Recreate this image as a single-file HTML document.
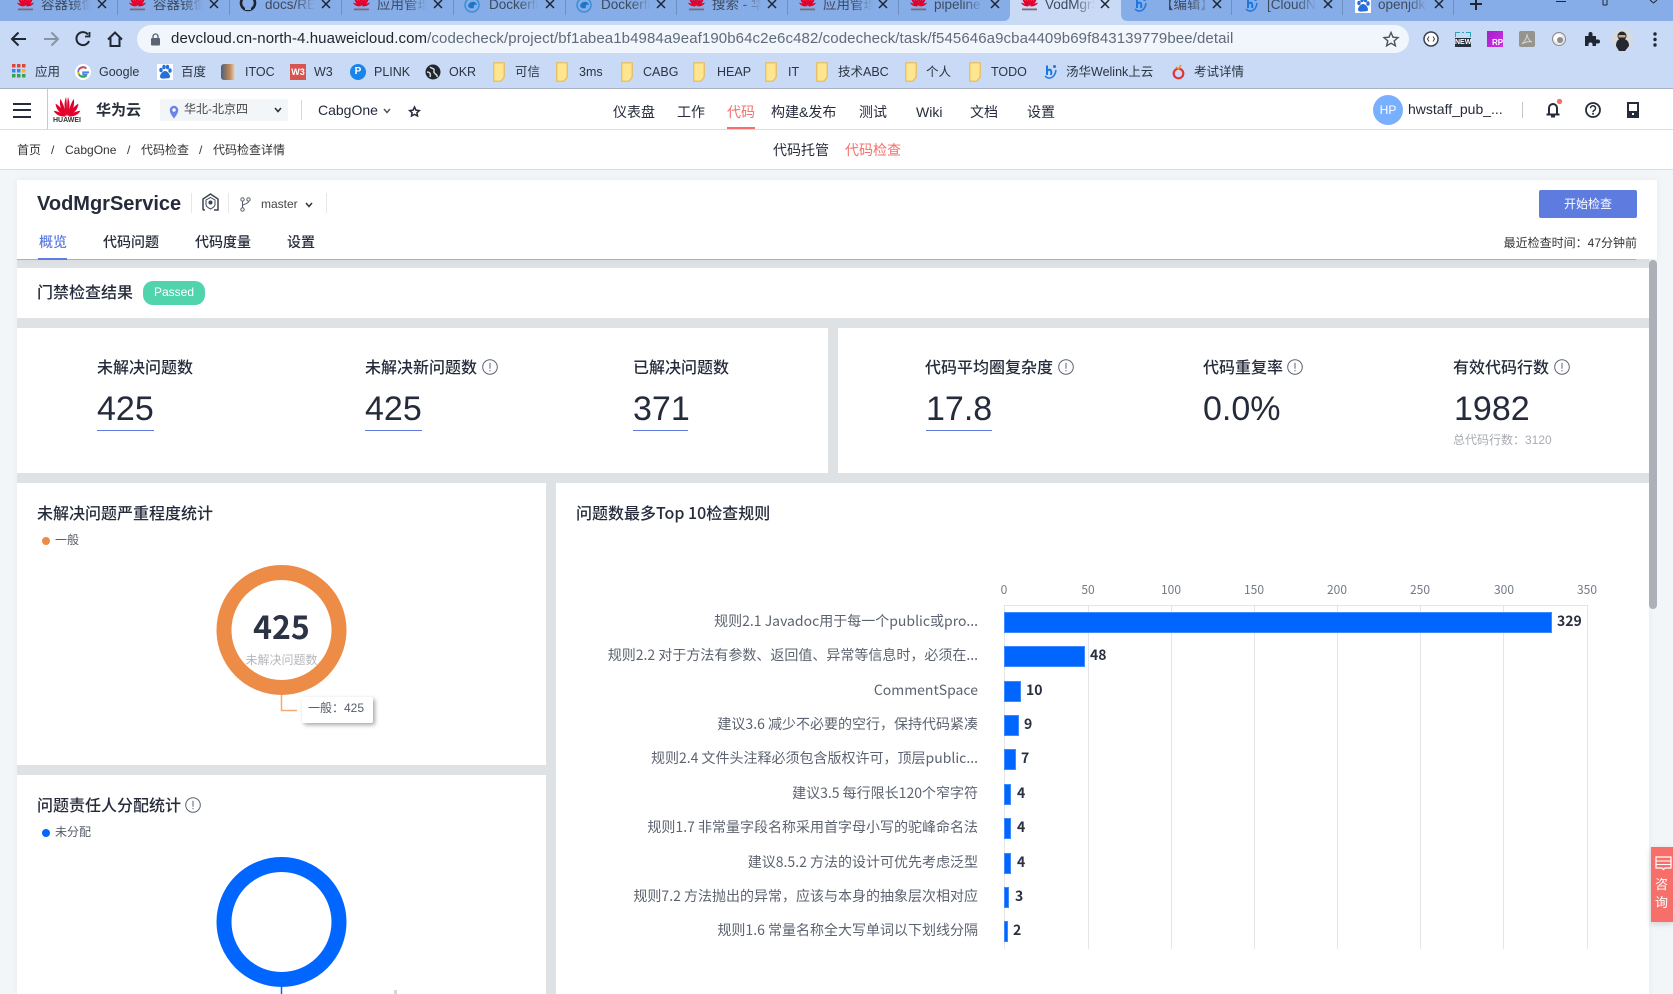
<!DOCTYPE html>
<html lang="zh"><head><meta charset="utf-8"><title>VodMgrService</title>
<style>
html,body{margin:0;padding:0;width:1673px;height:994px;overflow:hidden;background:#f3f6f9}
body{position:relative;font-family:"Liberation Sans","Noto Sans CJK SC",sans-serif;color:#252b3a}
.t{position:absolute;white-space:nowrap;line-height:20px;height:20px}
.b{position:absolute}
svg{position:absolute;overflow:visible}
.tab{font-size:13.5px;color:#3d4a5c;overflow:hidden;width:50px;top:-5px;-webkit-mask-image:linear-gradient(90deg,#000 60%,transparent);mask-image:linear-gradient(90deg,#000 60%,transparent)}
.bm{font-size:12.5px;color:#2b3440}
.n{font-size:14px;color:#252b3a}
.h{font-size:16px;font-weight:500;font-family:"Noto Sans CJK SC","Liberation Sans",sans-serif;color:#252b3a}
.big{font-size:34px;color:#252b3a;line-height:40px;height:40px}
.u{position:absolute;height:1px;background:#5e7ce0;top:430px}
.r{position:absolute;right:695px;font-family:"Noto Sans CJK SC",sans-serif;font-size:14px;color:#5c6370;white-space:nowrap;line-height:20px;height:20px}
.v{position:absolute;font-family:"Noto Sans CJK SC",sans-serif;font-size:14px;font-weight:700;color:#2a3042;line-height:20px;height:20px}
.bar{position:absolute;left:1004px;height:20.5px;background:#0066ff;box-shadow:inset 0 0 0 1px #3d8bff}
.ax{position:absolute;top:580px;font-family:"Noto Sans CJK SC",sans-serif;font-size:12px;color:#737a88;line-height:20px;width:40px;text-align:center}
.g{position:absolute;top:605px;height:344px;width:1px;background:#e4e5e8}
</style></head><body>

<svg width="0" height="0" style="position:absolute">
<symbol id="hw" viewBox="0 0 28 22">
<g fill="#e2002a">
<path d="M14 21C11 15 10.500 7 13 1 14 6 14 15 14 21Z"/>
<path d="M14 21C17 15 17.500 7 15 1 14 6 14 15 14 21Z"/>
<path d="M13.500 21C8 17 5.500 9 7 3 10 8 12.500 15 13.500 21Z"/>
<path d="M14.500 21C20 17 22.500 9 21 3 18 8 15.500 15 14.500 21Z"/>
<path d="M13 21C7 19 2.500 14 2 8 7 11 11 16 13 21Z"/>
<path d="M15 21C21 19 25.500 14 26 8 21 11 17 16 15 21Z"/>
<path d="M12.500 21.500C7 22 2 19.500 0 15.500 5 16 10 18.500 12.500 21.500Z"/>
<path d="M15.500 21.500C21 22 26 19.500 28 15.500 23 16 18 18.500 15.500 21.500Z"/>
</g></symbol>
<symbol id="thw" viewBox="0 0 17 20"><use href="#hw" width="17" height="14" x="0" y="0"/><rect x="1" y="15.500" width="15" height="1.800" fill="#7a6a78"/></symbol>
<symbol id="info" viewBox="0 0 16 16"><circle cx="8" cy="8" r="7.300" fill="none" stroke="#5a6270" stroke-width="1"/><path d="M8 3.800V9.800M8 11v1.300" stroke="#5a6270" stroke-width="1" fill="none"/></symbol>
<symbol id="x" viewBox="0 0 10 10"><path d="M1 1L9 9M9 1L1 9" stroke="#1e2632" stroke-width="1.500" fill="none"/></symbol>
<symbol id="hi" viewBox="0 0 16 16"><path d="M5 1.500V11M5 7c3-3 5-1 4 4" fill="none" stroke="#1a78e0" stroke-width="2"/><path d="M3 12c4 4 10 2 11-6" fill="none" stroke="#1a78e0" stroke-width="1.500"/><circle cx="12.500" cy="2.500" r="1.500" fill="#1a78e0"/></symbol>
<symbol id="fd" viewBox="0 0 12 20"><path d="M.8.800H11.200V15L8 19.200H.8Z" fill="#ffe58f" stroke="#e8bd4d" stroke-width="1.200"/></symbol>
<symbol id="paw" viewBox="0 0 16 16"><rect width="16" height="16" fill="#fff"/><g fill="#2a6fd8"><ellipse cx="4" cy="6" rx="1.700" ry="2.300"/><ellipse cx="7" cy="3" rx="1.700" ry="2.300"/><ellipse cx="10.500" cy="3" rx="1.700" ry="2.300"/><ellipse cx="13" cy="6.500" rx="1.700" ry="2.300"/><path d="M8 7c-2.500 0-5 3.500-5 5.500S5.500 15 8 14.500 13 15 13 12.500 10.500 7 8 7Z"/></g></symbol>
<symbol id="ed" viewBox="0 0 16 16"><circle cx="8" cy="8" r="7" fill="none" stroke="#3a8fd8" stroke-width="1.500"/><path d="M4 9c1-5 8-6 9-1-2-1-4 0-3 3-3 1-5 0-6-2Z" fill="#1a78c8"/></symbol>
</svg>

<!-- Tab strip -->
<div class="b" style="left:0;top:0;width:1673px;height:21px;background:#87ade8"></div>
<div class="b" style="left:0;top:21px;width:1673px;height:68px;background:#c9daf6"></div>
<div class="b" style="left:0;top:88px;width:1673px;height:1px;background:#a9b2c4"></div>
<svg style="left:0;top:0" width="1673" height="21"><path d="M1003 21Q1010 21 1010 14V0H1121V14Q1121 21 1128 21Z" fill="#c9daf6"/>
<g stroke="#6d8fc2" stroke-width="1"><path d="M117.500 0V15M229.500 0V15M341.500 0V15M453.500 0V15M565.500 0V15M676.500 0V15M787.500 0V15M898.500 0V15M1231.500 0V15M1342.500 0V15M1453.500 0V15"/></g></svg>

<svg style="left:17px;top:-7px" width="17" height="20"><use href="#thw" width="17" height="20"/></svg><div class="t tab" style="left:41px">容器镜像</div>
<svg style="left:129px;top:-7px" width="17" height="20"><use href="#thw" width="17" height="20"/></svg><div class="t tab" style="left:153px">容器镜像</div>
<svg style="left:240px;top:-5px" width="16" height="16"><circle cx="8" cy="8" r="7" fill="none" stroke="#1c2430" stroke-width="2.600"/><path d="M5 15V10H11V15Z" fill="#87ade8"/></svg><div class="t tab" style="left:265px">docs/README</div>
<svg style="left:353px;top:-7px" width="17" height="20"><use href="#thw" width="17" height="20"/></svg><div class="t tab" style="left:377px">应用管理</div>
<svg style="left:464px;top:-3px" width="16" height="16"><use href="#ed" width="16" height="16"/></svg><div class="t tab" style="left:489px">Dockerfile</div>
<svg style="left:576px;top:-3px" width="16" height="16"><use href="#ed" width="16" height="16"/></svg><div class="t tab" style="left:601px">Dockerfile</div>
<svg style="left:688px;top:-7px" width="17" height="20"><use href="#thw" width="17" height="20"/></svg><div class="t tab" style="left:712px">搜索 - 华为</div>
<svg style="left:799px;top:-7px" width="17" height="20"><use href="#thw" width="17" height="20"/></svg><div class="t tab" style="left:823px">应用管理</div>
<svg style="left:910px;top:-7px" width="17" height="20"><use href="#thw" width="17" height="20"/></svg><div class="t tab" style="left:934px">pipeline</div>
<svg style="left:1021px;top:-7px" width="17" height="20"><use href="#thw" width="17" height="20"/></svg><div class="t tab" style="left:1045px">VodMgrService</div>
<svg style="left:1132px;top:-3px" width="16" height="16"><use href="#hi" width="16" height="16"/></svg><div class="t tab" style="left:1160px">【编辑】</div>
<svg style="left:1243px;top:-3px" width="16" height="16"><use href="#hi" width="16" height="16"/></svg><div class="t tab" style="left:1267px">[CloudNative</div>
<svg style="left:1355px;top:-3px" width="16" height="16"><use href="#paw" width="16" height="16"/></svg><div class="t tab" style="left:1378px">openjdk</div>

<svg style="left:97px;top:-1px" width="10" height="10"><use href="#x" width="10" height="10"/></svg>
<svg style="left:209px;top:-1px" width="10" height="10"><use href="#x" width="10" height="10"/></svg>
<svg style="left:321px;top:-1px" width="10" height="10"><use href="#x" width="10" height="10"/></svg>
<svg style="left:433px;top:-1px" width="10" height="10"><use href="#x" width="10" height="10"/></svg>
<svg style="left:545px;top:-1px" width="10" height="10"><use href="#x" width="10" height="10"/></svg>
<svg style="left:656px;top:-1px" width="10" height="10"><use href="#x" width="10" height="10"/></svg>
<svg style="left:767px;top:-1px" width="10" height="10"><use href="#x" width="10" height="10"/></svg>
<svg style="left:878px;top:-1px" width="10" height="10"><use href="#x" width="10" height="10"/></svg>
<svg style="left:990px;top:-1px" width="10" height="10"><use href="#x" width="10" height="10"/></svg>
<svg style="left:1100px;top:-1px" width="10" height="10"><use href="#x" width="10" height="10"/></svg>
<svg style="left:1212px;top:-1px" width="10" height="10"><use href="#x" width="10" height="10"/></svg>
<svg style="left:1323px;top:-1px" width="10" height="10"><use href="#x" width="10" height="10"/></svg>
<svg style="left:1434px;top:-1px" width="10" height="10"><use href="#x" width="10" height="10"/></svg>
<svg style="left:1470px;top:-2px" width="12" height="12"><path d="M6 0V12M0 6H12" stroke="#1e2632" stroke-width="2"/></svg>
<svg style="left:1550px;top:0" width="120" height="8" fill="none" stroke="#1e2632" stroke-width="1"><path d="M6 1.500H16M53 5V0M57 5H53M57 0V5M100 0L103.500 3L107 0"/></svg>

<!-- Toolbar -->
<svg style="left:10px;top:29px" width="120" height="20" fill="none" stroke="#1f2733" stroke-width="2">
<path d="M16 10H2M8.500 3.500L2 10L8.500 16.500"/>
<path d="M34 10H48M41.500 3.500L48 10L41.500 16.500" stroke="#8694a6"/>
<path d="M78 5.500A6.500 6.500 0 1 0 79 12"/><path d="M79.500 3V7.500H75" stroke-width="1.800"/>
<path d="M98 10.500L105 3.500L112 10.500M100.500 9V17H109.500V9"/></svg>
<div class="b" style="left:137px;top:25px;width:1272px;height:28px;border-radius:14px;background:#f1f5fc"></div>
<svg style="left:150px;top:33px" width="11" height="13"><rect x="1" y="5" width="9" height="7.500" rx="1" fill="#5a6472"/><path d="M3 5.500V3.500a2.500 2.500 0 0 1 5 0V5.500" fill="none" stroke="#5a6472" stroke-width="1.300"/></svg>
<div class="t" id="url" style="left:171px;top:29px;font-size:15px;letter-spacing:.1px;color:#5f6b7a"><span style="color:#1c2430">devcloud.cn-north-4.huaweicloud.com</span>/codecheck/project/bf1abea1b4984a9eaf190b64c2e6c482/codecheck/task/f545646a9cba4409b69f843139779bee/detail</div>
<svg style="left:1383px;top:31px" width="16" height="16"><path d="M8 1.500L10 6.200L15 6.600L11.200 9.900L12.400 14.800L8 12.200L3.600 14.800L4.800 9.900L1 6.600L6 6.200Z" fill="none" stroke="#4a525e" stroke-width="1.400"/></svg>
<svg style="left:1423px;top:31px" width="16" height="16"><circle cx="8" cy="8" r="7" fill="#fff" stroke="#39424f" stroke-width="1.500"/><path d="M6 5.500L4.500 8L6 10.500M10 5.500L11.500 8L10 10.500" fill="none" stroke="#39424f"/></svg>
<div class="b" style="left:1455px;top:38px;width:16px;height:9px;background:#26303c"></div>
<svg style="left:1455px;top:32px" width="16" height="6"><path d="M.5 5V.5H5M11 .5H15.500V5M7 .5H9" fill="none" stroke="#2aa5b8"/></svg>
<div class="t" style="left:1455px;top:32.500px;width:16px;text-align:center;font-size:7px;font-weight:700;color:#fff">NEW</div>
<div class="b" style="left:1487px;top:31px;width:16px;height:16px;background:linear-gradient(135deg,#a31fc8,#d030e8)"></div><div class="t" style="left:1492px;top:33px;font-size:8px;font-weight:700;color:#fff">RP</div>
<div class="b" style="left:1519px;top:31px;width:16px;height:16px;background:#96948f;border-radius:2px"></div><svg style="left:1519px;top:31px" width="16" height="16"><path d="M3 13C7 9 8 5 8 3 8 6 10 10 13 11 9 10 6 11 3 13Z" fill="none" stroke="#d5d3ce"/></svg>
<svg style="left:1552px;top:32px" width="14" height="14"><circle cx="7" cy="7" r="6.500" fill="#e8e8e8" stroke="#8c8c8c"/><circle cx="6" cy="6" r="4" fill="#fff"/><circle cx="8" cy="8" r="3" fill="#8d8d8d"/></svg>
<svg style="left:1583px;top:31px" width="16" height="16"><path d="M2 5H5.500V3a2 2 0 0 1 4 0V5H13V8.500H15a2 2 0 0 1 0 4H13V15H9.500V13.500a2 2 0 0 0-4 0V15H2Z" fill="#1f2733"/></svg>
<svg style="left:1612px;top:28px" width="21" height="23"><circle cx="10.500" cy="11.500" r="10.500" fill="#d7dbe0"/><path d="M4 18C4 11 8 11 10 11S17 11 17 18L13 23H7Z" fill="#25282c"/><circle cx="10" cy="8" r="4.500" fill="#25282c"/><rect x="6.500" y="7" width="7" height="2.500" fill="#d9a577"/></svg>
<svg style="left:1653px;top:32px" width="4" height="15" fill="#1f2733"><circle cx="2" cy="2" r="1.700"/><circle cx="2" cy="7.500" r="1.700"/><circle cx="2" cy="13" r="1.700"/></svg>

<!-- Bookmarks -->
<svg style="left:12px;top:64px" width="14" height="14"><g fill="#e0453a"><rect width="3.500" height="3.500"/><rect x="5" width="3.500" height="3.500"/><rect x="10" width="3.500" height="3.500"/></g><g fill="#3f82e6"><rect y="5" width="3.500" height="3.500"/><rect x="5" y="5" width="3.500" height="3.500"/></g><rect x="10" y="5" width="3.500" height="3.500" fill="#f3b42d"/><g fill="#39a24f"><rect y="10" width="3.500" height="3.500"/><rect x="5" y="10" width="3.500" height="3.500"/><rect x="10" y="10" width="3.500" height="3.500"/></g></svg>
<div class="t bm" style="left:35px;top:62px">应用</div>
<svg style="left:75px;top:64px" width="16" height="16"><circle cx="8" cy="8" r="8" fill="#fff"/><path d="M14 8.300H8.200V10.500H11.500C11 11.700 9.800 12.500 8.200 12.500A4.700 4.700 0 1 1 11.300 4.500" fill="none" stroke="#4a86e8" stroke-width="1.800"/><path d="M4 5.700A4.700 4.700 0 0 1 11.300 4.500" fill="none" stroke="#e0453a" stroke-width="1.800"/><path d="M3.500 8A4.700 4.700 0 0 0 4 10.400" fill="none" stroke="#f3b42d" stroke-width="1.800"/><path d="M4 10.400A4.700 4.700 0 0 0 11.500 11.500" fill="none" stroke="#39a24f" stroke-width="1.800"/></svg>
<div class="t bm" style="left:99px;top:62px">Google</div>
<svg style="left:157px;top:64px" width="16" height="16"><use href="#paw" width="16" height="16"/></svg>
<div class="t bm" style="left:181px;top:62px">百度</div>
<div class="b" style="left:221px;top:64px;width:15px;height:16px;background:linear-gradient(90deg,#4c5f7a,#c48a55 60%,#dfe6ef);border-radius:3px"></div>
<div class="t bm" style="left:245px;top:62px">ITOC</div>
<div class="b" style="left:290px;top:64px;width:16px;height:16px;background:#d9534f;color:#fff;font-size:9px;font-weight:700;line-height:16px;text-align:center">W3</div>
<div class="t bm" style="left:314px;top:62px">W3</div>
<div class="b" style="left:350px;top:64px;width:16px;height:16px;border-radius:50%;background:#1a84ea;color:#fff;font-size:10px;font-weight:700;line-height:16px;text-align:center">P</div>
<div class="t bm" style="left:374px;top:62px">PLINK</div>
<svg style="left:425px;top:64px" width="16" height="16"><circle cx="8" cy="8" r="7.500" fill="#22272e"/><path d="M5 3C7 5 10 4 9 7S13 10 12 13M2 8C5 8 6 10 5 13" fill="none" stroke="#cfd6dd" stroke-width="1.500"/></svg>
<div class="t bm" style="left:449px;top:62px">OKR</div>
<svg style="left:493px;top:62px" width="12" height="20"><use href="#fd" width="12" height="20"/></svg><div class="t bm" style="left:515px;top:62px">可信</div>
<svg style="left:556px;top:62px" width="12" height="20"><use href="#fd" width="12" height="20"/></svg><div class="t bm" style="left:579px;top:62px">3ms</div>
<svg style="left:621px;top:62px" width="12" height="20"><use href="#fd" width="12" height="20"/></svg><div class="t bm" style="left:643px;top:62px">CABG</div>
<svg style="left:693px;top:62px" width="12" height="20"><use href="#fd" width="12" height="20"/></svg><div class="t bm" style="left:717px;top:62px">HEAP</div>
<svg style="left:765px;top:62px" width="12" height="20"><use href="#fd" width="12" height="20"/></svg><div class="t bm" style="left:788px;top:62px">IT</div>
<svg style="left:816px;top:62px" width="12" height="20"><use href="#fd" width="12" height="20"/></svg><div class="t bm" style="left:838px;top:62px">技术ABC</div>
<svg style="left:905px;top:62px" width="12" height="20"><use href="#fd" width="12" height="20"/></svg><div class="t bm" style="left:926px;top:62px">个人</div>
<svg style="left:969px;top:62px" width="12" height="20"><use href="#fd" width="12" height="20"/></svg><div class="t bm" style="left:991px;top:62px">TODO</div>
<svg style="left:1042px;top:64px" width="16" height="16"><use href="#hi" width="16" height="16"/></svg><div class="t bm" style="left:1066px;top:62px">汤华Welink上云</div>
<svg style="left:1172px;top:64px" width="13" height="16"><circle cx="6.500" cy="9.500" r="4.800" fill="none" stroke="#e2333b" stroke-width="2.200"/><path d="M4 3L6.500 5L9 1" fill="none" stroke="#e8932b" stroke-width="1.500"/></svg><div class="t bm" style="left:1194px;top:62px">考试详情</div>

<!-- Nav bar -->
<div class="b" style="left:0;top:89px;width:1673px;height:40px;background:#fff;border-bottom:1px solid #dcdcdc"></div>
<div class="b" style="left:13px;top:103px;width:18px;height:2px;background:#252b3a"></div>
<div class="b" style="left:13px;top:109px;width:18px;height:2px;background:#252b3a"></div>
<div class="b" style="left:13px;top:116px;width:18px;height:2px;background:#252b3a"></div>
<div class="b" style="left:47px;top:89px;width:1px;height:40px;background:#c9c9c9"></div>
<svg style="left:53px;top:96px" width="28" height="21"><use href="#hw" width="28" height="21"/></svg>
<div class="t" style="left:53px;top:111px;width:28px;text-align:center;font-size:7px;color:#333;font-weight:700">HUAWEI</div>
<div class="t" style="left:96px;top:101px;font-size:15px;font-weight:700;color:#2a2f3c">华为云</div>
<div class="b" style="left:160px;top:99px;width:128px;height:22px;background:#f3f6f9"></div>
<svg style="left:169px;top:105px" width="10" height="14"><path d="M5 13.500C2 9.500.8 7.500.8 5a4.200 4.200 0 0 1 8.400 0C9.200 7.500 8 9.500 5 13.500Z" fill="#6a84e8"/><circle cx="5" cy="5" r="1.700" fill="#fff"/></svg>
<div class="t" style="left:184px;top:99px;font-size:12px;color:#444">华北-北京四</div>
<svg style="left:274px;top:107px" width="8" height="6"><path d="M1 1L4 4.500L7 1" fill="none" stroke="#333" stroke-width="1.600"/></svg>
<div class="b" style="left:301px;top:100px;width:1px;height:20px;background:#d8d8d8"></div>
<div class="t n" style="left:318px;top:100px">CabgOne</div>
<svg style="left:383px;top:108px" width="8" height="6"><path d="M1 1L4 4.500L7 1" fill="none" stroke="#555" stroke-width="1.500"/></svg>
<svg style="left:409px;top:106px" width="11" height="11"><path d="M5.500 1L7 4.200L10.300 4.600L7.900 6.800L8.500 10L5.500 8.400L2.500 10L3.100 6.800L.7 4.600L4 4.200Z" fill="none" stroke="#252b3a" stroke-width="1.500"/></svg>
<div class="t n" style="left:613px;top:102px">仪表盘</div>
<div class="t n" style="left:677px;top:102px">工作</div>
<div class="t n" style="left:727px;top:102px;color:#f66f6a">代码</div>
<div class="b" style="left:727px;top:127px;width:28px;height:2px;background:#f66f6a"></div>
<div class="t n" style="left:771px;top:102px">构建&amp;发布</div>
<div class="t n" style="left:859px;top:102px">测试</div>
<div class="t n" style="left:916px;top:102px">Wiki</div>
<div class="t n" style="left:970px;top:102px">文档</div>
<div class="t n" style="left:1027px;top:102px">设置</div>
<div class="b" style="left:1373px;top:95px;width:30px;height:30px;border-radius:50%;background:#78b0ff;color:#fff;font-size:12px;line-height:30px;text-align:center">HP</div>
<div class="t n" style="left:1408px;top:99px">hwstaff_pub_...</div>
<div class="b" style="left:1522px;top:102px;width:1px;height:16px;background:#c4c6cc"></div>
<svg style="left:1544px;top:99px" width="20" height="19"><path d="M2.500 15.500H15.500M5 15.500V9a4 4 0 0 1 8 0V15.500" fill="none" stroke="#252b3a" stroke-width="2"/><rect x="7" y="16.500" width="4" height="2" fill="#252b3a"/><circle cx="15.500" cy="2.500" r="2.700" fill="#f66f6a"/></svg>
<svg style="left:1585px;top:102px" width="16" height="16"><circle cx="8" cy="8" r="7" fill="none" stroke="#252b3a" stroke-width="1.800"/><path d="M5.500 6.200a2.500 2.500 0 1 1 3.500 2.300C8.300 9 8 9.400 8 10.300" fill="none" stroke="#252b3a" stroke-width="1.500"/><rect x="7.200" y="11" width="1.700" height="1.700" fill="#252b3a"/></svg>
<svg style="left:1627px;top:102px" width="12" height="16"><rect x="1" y="1" width="10" height="14" fill="none" stroke="#252b3a" stroke-width="2"/><rect x="1" y="9" width="10" height="6" fill="#252b3a"/><rect x="5" y="11" width="2" height="2" fill="#fff"/></svg>

<!-- Breadcrumb -->
<div class="b" style="left:0;top:130px;width:1673px;height:39px;background:#fff;border-bottom:1px solid #dcdcdc"></div>
<div class="t" style="left:17px;top:140px;font-size:12px;color:#333">首页</div>
<div class="t" style="left:51px;top:140px;font-size:12px;color:#333">/</div>
<div class="t" style="left:65px;top:140px;font-size:12px;color:#333">CabgOne</div>
<div class="t" style="left:127px;top:140px;font-size:12px;color:#333">/</div>
<div class="t" style="left:141px;top:140px;font-size:12px;color:#333">代码检查</div>
<div class="t" style="left:199px;top:140px;font-size:12px;color:#333">/</div>
<div class="t" style="left:213px;top:140px;font-size:12px;color:#333">代码检查详情</div>
<div class="t n" style="left:773px;top:140px;font-size:14px">代码托管</div>
<div class="t n" style="left:845px;top:140px;color:#f66f6a">代码检查</div>

<!-- Gray base -->
<div class="b" style="left:17px;top:259px;width:1632px;height:735px;background:#dfe2e4;box-shadow:0 0 8px rgba(0,0,0,.05)"></div>

<!-- Header card -->
<div class="b" style="left:17px;top:180px;width:1640px;height:79px;background:#fff;box-shadow:0 0 8px rgba(0,0,0,.05)"></div>
<div class="b" style="left:17px;top:259px;width:1619px;height:1px;background:#adb0b8"></div>
<div class="t" style="left:37px;top:194px;font-size:20px;font-weight:700;color:#252b3a">VodMgrService</div>
<div class="b" style="left:191px;top:193px;width:1px;height:20px;background:#e6e6e6"></div>
<svg style="left:202px;top:193px" width="17" height="18"><path d="M1 17V6L8.500 1L16 6V17H12" fill="none" stroke="#3c4454" stroke-width="1.500"/><path d="M3 17H1" stroke="#3c4454" stroke-width="1.500"/><path d="M8.500 4.500L13 7V11.500C13 13.500 10.500 15 8.500 16C6.500 15 4 13.500 4 11.500V7Z" fill="none" stroke="#3c4454"/><circle cx="8.500" cy="9.500" r="2" fill="#3c4454"/></svg>
<div class="b" style="left:228px;top:193px;width:1px;height:20px;background:#e6e6e6"></div>
<svg style="left:240px;top:197px" width="11" height="15" fill="none" stroke="#5a6270"><circle cx="2.500" cy="2.500" r="1.700"/><circle cx="8.500" cy="2.500" r="1.700"/><circle cx="2.500" cy="12.500" r="1.700"/><path d="M2.500 4.200V10.800M8.500 4.200C8.500 7.500 2.500 6.500 2.500 9"/></svg>
<div class="t" style="left:261px;top:194px;font-size:12px;color:#444">master</div>
<svg style="left:305px;top:202px" width="8" height="6"><path d="M1 1L4 4.500L7 1" fill="none" stroke="#333" stroke-width="1.500"/></svg>
<div class="b" style="left:326px;top:193px;width:1px;height:20px;background:#e6e6e6"></div>
<div class="t" style="left:39px;top:232px;font-size:14px;color:#5e7ce0;font-family:'Noto Sans CJK SC',sans-serif;font-weight:500">概览</div>
<div class="b" style="left:38px;top:258px;width:29px;height:2px;background:#5e7ce0"></div>
<div class="t" style="left:103px;top:232px;font-size:14px;font-weight:500;font-family:'Noto Sans CJK SC',sans-serif">代码问题</div>
<div class="t" style="left:195px;top:232px;font-size:14px;font-weight:500;font-family:'Noto Sans CJK SC',sans-serif">代码度量</div>
<div class="t" style="left:287px;top:232px;font-size:14px;font-weight:500;font-family:'Noto Sans CJK SC',sans-serif">设置</div>
<div class="b" style="left:1539px;top:190px;width:98px;height:28px;border-radius:2px;background:#5e7ce0;color:#fff;font-size:12px;line-height:28px;text-align:center">开始检查</div>
<div class="t" style="right:36px;top:233px;font-size:12px;color:#333">最近检查时间：47分钟前</div>

<!-- Gate card -->
<div class="b" style="left:17px;top:268px;width:1632px;height:50px;background:#fff"></div>
<div class="t h" style="left:37px;top:281px">门禁检查结果</div>
<div class="b" style="left:143px;top:281px;width:62px;height:24px;border-radius:10px;background:#50d4ab;color:#fff;font-size:12px;line-height:22px;text-align:center">Passed</div>

<!-- Stats -->
<div class="b" style="left:17px;top:328px;width:811px;height:145px;background:#fff"></div>
<div class="b" style="left:838px;top:328px;width:811px;height:145px;background:#fff"></div>

<div class="t h" style="left:97px;top:356px">未解决问题数</div>
<div class="t big" style="left:97px;top:389px">425</div><div class="u" style="left:97px;width:57px"></div>
<div class="t h" style="left:365px;top:356px">未解决新问题数</div>
<svg style="left:482px;top:359px" width="16" height="16"><use href="#info" width="16" height="16"/></svg>
<div class="t big" style="left:365px;top:389px">425</div><div class="u" style="left:365px;width:57px"></div>
<div class="t h" style="left:633px;top:356px">已解决问题数</div>
<div class="t big" style="left:633px;top:389px">371</div><div class="u" style="left:633px;width:55px"></div>
<div class="t h" style="left:925px;top:356px">代码平均圈复杂度</div>
<svg style="left:1058px;top:359px" width="16" height="16"><use href="#info" width="16" height="16"/></svg>
<div class="t big" style="left:926px;top:389px">17.8</div><div class="u" style="left:926px;width:66px"></div>
<div class="t h" style="left:1203px;top:356px">代码重复率</div>
<svg style="left:1287px;top:359px" width="16" height="16"><use href="#info" width="16" height="16"/></svg>
<div class="t big" style="left:1203px;top:389px">0.0%</div>
<div class="t h" style="left:1453px;top:356px">有效代码行数</div>
<svg style="left:1554px;top:359px" width="16" height="16"><use href="#info" width="16" height="16"/></svg>
<div class="t big" style="left:1454px;top:389px">1982</div>
<div class="t" style="left:1453px;top:430px;font-size:12px;color:#a8abb2">总代码行数：3120</div>

<!-- Left chart 1 -->
<div class="b" style="left:17px;top:483px;width:529px;height:282px;background:#fff"></div>
<div class="t h" style="left:37px;top:502px">未解决问题严重程度统计</div>
<div class="b" style="left:42px;top:537px;width:8px;height:8px;border-radius:50%;background:#ed8c47"></div>
<div class="t" style="left:55px;top:530px;font-size:12px;color:#555c68">一般</div>
<svg style="left:216px;top:565px" width="170" height="170"><circle cx="65.500" cy="65" r="57.500" fill="none" stroke="#ed8c47" stroke-width="15"/><path d="M65.500 130V145.500H81" fill="none" stroke="#f2ab76" stroke-width="1.500"/></svg>
<div class="t" style="left:216px;top:609px;width:131px;text-align:center;line-height:34px;height:34px;font-family:'Noto Sans CJK SC',sans-serif;font-size:32px;font-weight:700;color:#2c3345">425</div>
<div class="t" style="left:216px;top:650px;width:131px;text-align:center;font-size:12px;color:#b5b7bb">未解决问题数</div>
<div class="b" style="left:302px;top:697px;width:71px;height:26px;background:#fff;border-radius:2px;box-shadow:2px 2px 4px rgba(0,0,0,.35)"></div>
<div class="t" style="left:308px;top:698px;font-size:12px;color:#555c68">一般：425</div>

<!-- Left chart 2 -->
<div class="b" style="left:17px;top:775px;width:529px;height:219px;background:#fff"></div>
<div class="t h" style="left:37px;top:794px">问题责任人分配统计</div>
<svg style="left:185px;top:797px" width="16" height="16"><use href="#info" width="16" height="16"/></svg>
<div class="b" style="left:42px;top:829px;width:8px;height:8px;border-radius:50%;background:#0066ff"></div>
<div class="t" style="left:55px;top:822px;font-size:12px;color:#555c68">未分配</div>
<svg style="left:216px;top:857px" width="170" height="137"><circle cx="65.500" cy="65" r="57.500" fill="none" stroke="#0066ff" stroke-width="15"/><path d="M65.500 130V137" stroke="#0066ff" stroke-width="1.500"/></svg>
<div class="b" style="left:394px;top:990px;width:3px;height:4px;background:#d5d5d5"></div>

<!-- Right chart -->
<div class="b" style="left:556px;top:483px;width:1093px;height:511px;background:#fff"></div>
<div class="t h" style="left:576px;top:502px">问题数最多Top 10检查规则</div>

<div class="ax" style="left:984px">0</div><div class="ax" style="left:1068px">50</div><div class="ax" style="left:1151px">100</div><div class="ax" style="left:1234px">150</div><div class="ax" style="left:1317px">200</div><div class="ax" style="left:1400px">250</div><div class="ax" style="left:1484px">300</div><div class="ax" style="left:1567px">350</div>
<div class="b" style="left:1004px;top:605px;width:584px;height:1px;background:#e4e5e8"></div>
<div class="g" style="left:1004px"></div><div class="g" style="left:1088px"></div><div class="g" style="left:1171px"></div><div class="g" style="left:1254px"></div><div class="g" style="left:1337px"></div><div class="g" style="left:1420px"></div><div class="g" style="left:1503px"></div><div class="g" style="left:1587px"></div>

<div class="bar" style="top:612px;width:548px"></div><div class="v" style="left:1557px;top:611px">329</div>
<div class="bar" style="top:646px;width:80.500px"></div><div class="v" style="left:1090px;top:645px">48</div>
<div class="bar" style="top:681px;width:17px"></div><div class="v" style="left:1026px;top:680px">10</div>
<div class="bar" style="top:715px;width:15px"></div><div class="v" style="left:1024px;top:714px">9</div>
<div class="bar" style="top:749px;width:12px"></div><div class="v" style="left:1021px;top:748px">7</div>
<div class="bar" style="top:784px;width:7px"></div><div class="v" style="left:1017px;top:783px">4</div>
<div class="bar" style="top:818px;width:7px"></div><div class="v" style="left:1017px;top:817px">4</div>
<div class="bar" style="top:853px;width:7px"></div><div class="v" style="left:1017px;top:852px">4</div>
<div class="bar" style="top:887px;width:5px"></div><div class="v" style="left:1015px;top:886px">3</div>
<div class="bar" style="top:921px;width:3.500px"></div><div class="v" style="left:1013px;top:920px">2</div>

<div class="r" style="top:611px">规则2.1 Javadoc用于每一个public或pro...</div>
<div class="r" style="top:645px">规则2.2 对于方法有参数、返回值、异常等信息时，必须在...</div>
<div class="r" style="top:680px">CommentSpace</div>
<div class="r" style="top:714px">建议3.6 减少不必要的空行，保持代码紧凑</div>
<div class="r" style="top:748px">规则2.4 文件头注释必须包含版权许可，顶层public...</div>
<div class="r" style="top:783px">建议3.5 每行限长120个窄字符</div>
<div class="r" style="top:817px">规则1.7 非常量字段名称采用首字母小写的驼峰命名法</div>
<div class="r" style="top:852px">建议8.5.2 方法的设计可优先考虑泛型</div>
<div class="r" style="top:886px">规则7.2 方法抛出的异常，应该与本身的抽象层次相对应</div>
<div class="r" style="top:920px">规则1.6 常量名称全大写单词以下划线分隔</div>

<!-- Scrollbar -->
<div class="b" style="left:1649px;top:260px;width:8px;height:349px;border-radius:4px;background:#adb0b8"></div>

<!-- Consult -->
<div class="b" style="left:1651px;top:847px;width:22px;height:75px;background:#f66f6a;box-shadow:0 2px 6px rgba(0,0,0,.15)"></div>
<svg style="left:1655px;top:856px" width="18" height="15"><path d="M1 1H16V12H10L8.500 13.500L7 12H1Z" fill="none" stroke="#fff" stroke-width="1.200"/><path d="M1 5H16M1 8.500H16" stroke="#fff"/></svg>
<div class="t" style="left:1655px;top:875px;font-size:13px;color:#fff">咨</div>
<div class="t" style="left:1655px;top:893px;font-size:13px;color:#fff">询</div>
</body></html>
